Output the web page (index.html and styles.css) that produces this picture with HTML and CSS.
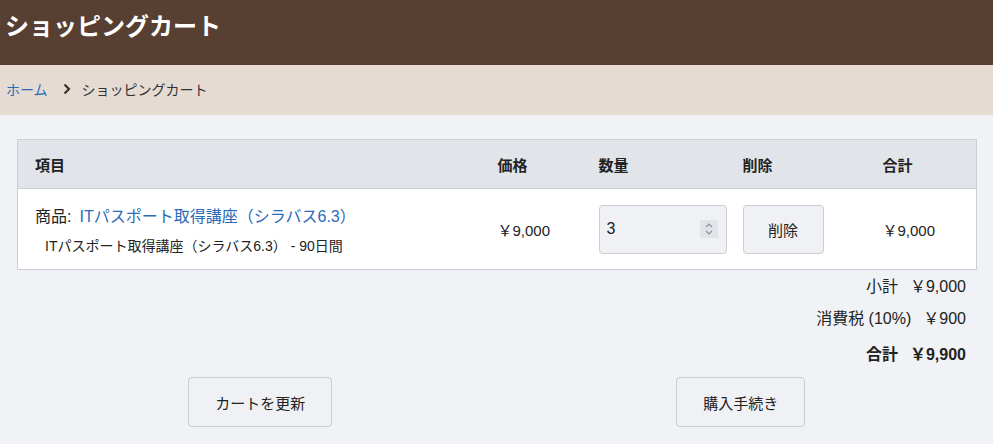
FILE: index.html
```html
<!DOCTYPE html>
<html lang="ja">
<head>
<meta charset="utf-8">
<title>ショッピングカート</title>
<link rel="stylesheet" href="styles.css">
</head>
<body>
<header class="site-header">
  <h1 class="page-title">ショッピングカート</h1>
</header>
<nav class="breadcrumb">
  <a class="crumb-link" href="#">ホーム</a>
  <svg class="crumb-sep" width="10" height="12" viewBox="0 0 10 12"><path d="M2.5 1.5 L7 6 L2.5 10.5" fill="none" stroke="#333" stroke-width="2.2"/></svg>
  <span class="crumb-current">ショッピングカート</span>
</nav>
<main class="main">
  <table class="cart">
    <colgroup>
      <col class="c-item"><col class="c-price"><col class="c-qty"><col class="c-del"><col class="c-total">
    </colgroup>
    <thead>
      <tr><th>項目</th><th>価格</th><th>数量</th><th>削除</th><th>合計</th></tr>
    </thead>
    <tbody>
      <tr>
        <td>
          <div class="item-name">商品:<a class="item-link" href="#">ITパスポート取得講座（シラバス6.3）</a></div>
          <div class="item-desc">ITパスポート取得講座（シラバス6.3） - 90日間</div>
        </td>
        <td class="num">￥9,000</td>
        <td>
          <div class="qty">
            <span class="qty-val">3</span>
            <span class="spin"><svg width="18" height="18" viewBox="0 0 18 18"><path d="M6 7 L9 4 L12 7" fill="none" stroke="#8a8d94" stroke-width="1.1"/><path d="M6 11 L9 14 L12 11" fill="none" stroke="#8a8d94" stroke-width="1.1"/></svg></span>
          </div>
        </td>
        <td><button class="btn btn-del" type="button">削除</button></td>
        <td class="num">￥9,000</td>
      </tr>
    </tbody>
  </table>
  <div class="totals">
    <div class="t-row"><span>小計</span><span class="t-val">￥9,000</span></div>
    <div class="t-row"><span>消費税 (10%)</span><span class="t-val">￥900</span></div>
    <div class="t-row t-grand"><span>合計</span><span class="t-val">￥9,900</span></div>
  </div>
  <div class="actions">
    <button class="btn btn-action" type="button">カートを更新</button>
    <button class="btn btn-action" type="button">購入手続き</button>
  </div>
</main>
</body>
</html>
```
FILE: styles.css
```css
html, body {
  margin: 0;
  padding: 0;
}
body {
  background: #f0f2f5;
  font-family: "Liberation Sans", "Noto Sans CJK JP", sans-serif;
  color: #222;
}
.site-header {
  background: #573f31;
  height: 65px;
  box-sizing: border-box;
  padding: 9px 5px 0;
}
.page-title {
  margin: 0;
  font-size: 24px;
  line-height: 36px;
  font-weight: bold;
  color: #fff;
}
.breadcrumb {
  background: #e5dbd3;
  height: 50px;
  box-sizing: border-box;
  padding: 0 6px 2px;
  display: flex;
  align-items: center;
  font-size: 14px;
}
.crumb-link {
  color: #2c6bb6;
  text-decoration: none;
}
.crumb-sep {
  margin: 0 10px 0 14px;
}
.crumb-current {
  color: #333;
}
.main {
  padding: 24px 16px 0 17px;
}
.cart {
  width: 960px;
  border-collapse: collapse;
  table-layout: fixed;
  border: 1px solid #cbcfd5;
  background: #fff;
}
.c-item { width: 463px; }
.c-price { width: 101px; }
.c-qty { width: 144px; }
.c-del { width: 140px; }
.cart th {
  background: #e1e4e9;
  height: 48px;
  text-align: left;
  padding: 0 0 0 17px;
  font-size: 15px;
  font-weight: bold;
  color: #222;
  border-bottom: 1px solid #cbcfd5;
}
.cart td {
  height: 80px;
  padding: 0 0 0 17px;
  vertical-align: middle;
  font-size: 15px;
}
.item-name {
  font-size: 16px;
  line-height: 22px;
  margin-top: 2px;
}
.item-link {
  color: #2c6bb6;
  text-decoration: none;
  margin-left: 8px;
}
.item-desc {
  font-size: 14px;
  padding-left: 10px;
  margin-top: 9px;
  line-height: 18px;
}
.num {
  font-size: 16px;
}
.qty {
  width: 128px;
  height: 49px;
  box-sizing: border-box;
  border: 1px solid #c9ccd3;
  border-radius: 4px;
  background: #eff1f5;
  display: flex;
  align-items: center;
  justify-content: space-between;
  padding: 0 8px 0 7px;
  font-size: 16px;
}
.spin {
  display: flex;
  background: #e2e4e9;
  width: 18px;
  height: 18px;
}
.btn {
  font-family: "Liberation Sans", "Noto Sans CJK JP", sans-serif;
  background: #eff1f5;
  border: 1px solid #c9ccd3;
  border-radius: 4px;
  color: #222;
  font-size: 15px;
  cursor: pointer;
}
.btn-del {
  width: 81px;
  height: 49px;
}
.totals {
  padding: 1px 11px 0 0;
  text-align: right;
  font-size: 16px;
}
.t-row {
  line-height: 32px;
}
.t-val {
  margin-left: 12px;
}
.t-grand {
  font-weight: bold;
  margin-top: 4px;
}
.actions {
  display: grid;
  grid-template-columns: 1fr 1fr;
  justify-items: center;
  margin: 6px -4px 0 3px;
}
.btn-action {
  height: 50px;
  padding: 0 26px;
}
```
